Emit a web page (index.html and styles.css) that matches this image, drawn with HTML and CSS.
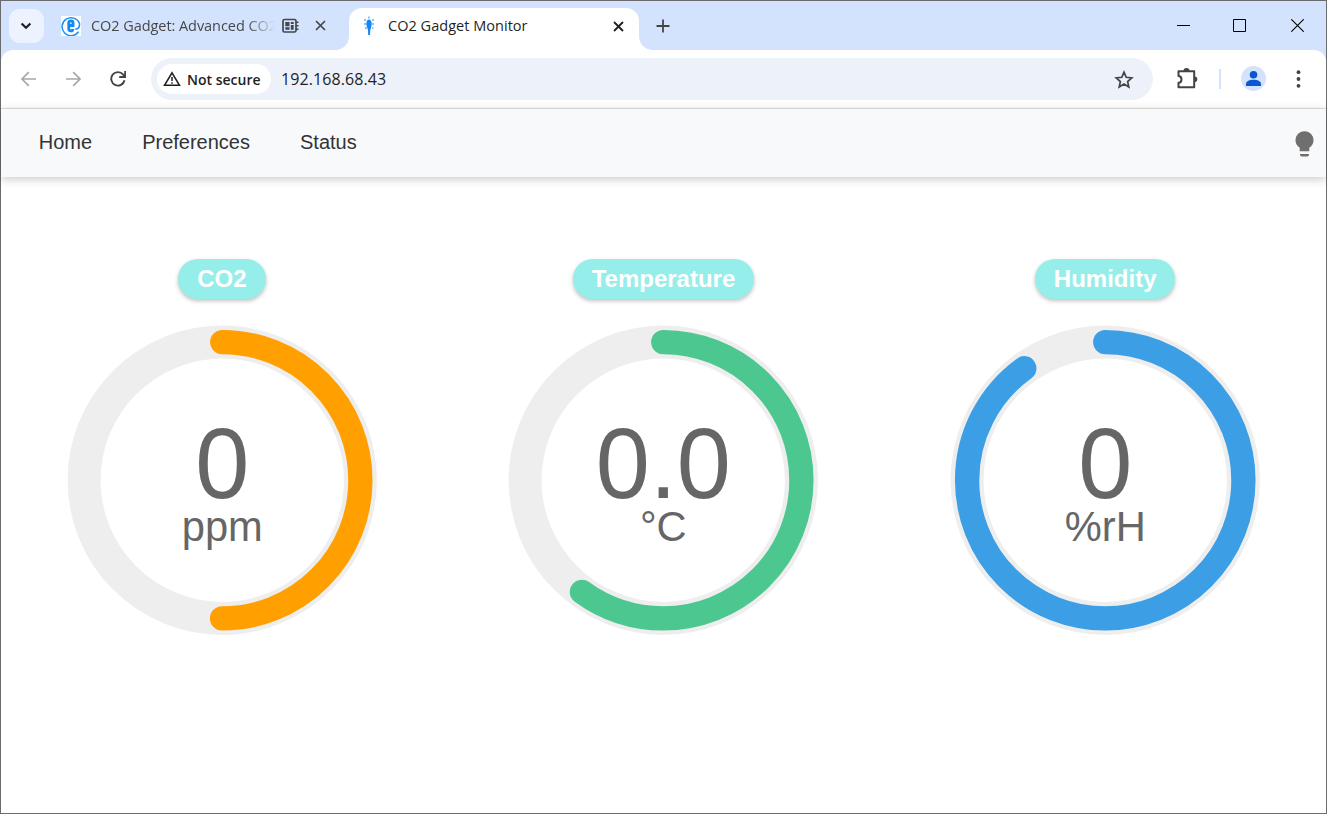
FILE: index.html
```html
<!DOCTYPE html>
<html lang="en">
<head>
<meta charset="utf-8">
<title>CO2 Gadget Monitor</title>
<link rel="stylesheet" href="styles.css">
</head>
<body>
<div class="window">
  <header class="tabstrip">
    <button class="tab-search" aria-label="Search tabs"><svg width="12" height="8" viewBox="0 0 12 8"><path d="M1.6 1.5 6 5.7l4.400-4.200" fill="none" stroke="#1f1f1f" stroke-width="2.200"/></svg></button>
    <div class="tab tab-idle">
      <svg class="favicon" width="20" height="20" viewBox="0 0 20 20"><path fill="#fff" d="M0 0h20v20H0z"/><path d="M17.500 15.800A9 9 0 1 1 18.500 7.500C18.800 11 17 13 14.300 13.300" fill="none" stroke="#1e8ff5" stroke-width="1.500"/><path d="M7.800 9.500h4.200V6.800c0-2.600-4.200-2.600-4.200 0v6c0 2.700 3.900 2.700 4.200.2" fill="none" stroke="#1688f3" stroke-width="2.900"/></svg>
      <span class="tab-title idle-title">CO2 Gadget: Advanced CO2</span>
      <svg class="memory" width="17" height="16" viewBox="0 0 17 16"><rect x="1" y="1.500" width="13" height="12.500" rx="1.500" fill="none" stroke="#44474c" stroke-width="1.700"/><path d="M3.300 4h4.200v4.200H3.300zM8.800 4h2.900v2H8.800zM8.800 7h2.900v4.700H8.800zM3.300 9.300h4.200v2.400H3.300zM14 3.500h2.500V5H14zM14 7h2.500v1.500H14zM14 10.500h2.500V12H14z" fill="#44474c"/></svg>
      <svg class="close" width="11" height="11" viewBox="0 0 11 11"><path d="m1 1 9 9m0-9-9 9" stroke="#44474c" stroke-width="1.700"/></svg>
    </div>
    <div class="tab tab-active">
      <svg class="favicon" width="10" height="20" viewBox="0 0 10 20"><path d="M5 3.500C7.500 4 8.400 7 7.200 11L6.300 14 6 19H4.200L4 14 3 11C1.700 7 2.500 4 5 3.500" fill="#1686f5"/><path d="M4 .5h2v2H4zM0 3h2v2H0zM8 3h2v2H8zM0 7h2v2H0zM8 7h2v2H8zM1 11h2v2H1zM8 11h1.500v2H8z" fill="#8bc4fb"/></svg>
      <span class="tab-title active-title">CO2 Gadget Monitor</span>
      <svg class="close" width="11" height="11" viewBox="0 0 11 11"><path d="m1 1 9 9m0-9-9 9" stroke="#1f1f1f" stroke-width="1.800"/></svg>
    </div>
    <svg class="new-tab" width="14" height="14" viewBox="0 0 14 14"><path d="M7 .5v13M.5 7h13" stroke="#444" stroke-width="1.800"/></svg>
    <div class="window-controls">
      <svg width="13" height="13" viewBox="0 0 13 13"><path d="M0 6.500h13" stroke="#000"/></svg>
      <svg class="maximize" width="13" height="13" viewBox="0 0 13 13"><path d="M.5.5h12v12H.5z" fill="none" stroke="#000"/></svg>
      <svg width="13" height="13" viewBox="0 0 13 13"><path d="m.3.300 12.400 12.400m0-12.400L.3 12.700" stroke="#000" stroke-width="1.100"/></svg>
    </div>
  </header>

  <div class="toolbar-wrap">
    <div class="toolbar">
      <svg class="back" width="16" height="16" viewBox="0 0 16 16"><path d="M16 8H2M8.800 1.200 2 8l6.800 6.800" fill="none" stroke="#a8a8a8" stroke-width="1.700"/></svg>
      <svg class="forward" width="16" height="16" viewBox="0 0 16 16"><path d="M0 8h14M7.200 1.200 14 8l-6.800 6.800" fill="none" stroke="#a8a8a8" stroke-width="1.700"/></svg>
      <svg class="reload" width="16" height="16" viewBox="0 0 16 16"><path d="M14.500 9.200A6.700 6.700 0 1 1 13.200 3.700L15 5.500M15.200 0v6H9.200" fill="none" stroke="#444" stroke-width="1.900"/></svg>
      <div class="omnibox">
        <div class="chip">
          <svg width="18" height="16" viewBox="0 0 18 16"><path d="M9 1.800 16.400 14.200H1.600z" fill="none" stroke="#1f1f1f" stroke-width="1.600"/><path d="M9 6v4m0 1.200v1.600" stroke="#1f1f1f" stroke-width="1.500"/></svg>
          <span class="chip-label">Not secure</span>
        </div>
        <span class="address">192.168.68.43</span>
        <svg class="star" width="20" height="19" viewBox="0 0 20 19"><path d="m10 2.200 2.200 5.100 5.600.5-4.200 3.700 1.200 5.400L10 14l-4.800 2.900 1.200-5.400-4.200-3.700 5.600-.5z" fill="none" stroke="#444" stroke-width="1.700"/></svg>
      </div>
      <svg class="puzzle" width="21" height="21" viewBox="0 0 21 21"><path d="M1.500 3.300h15.700v16H1.500v-4.500c4-.2 4-6.600 0-6.800z" fill="none" stroke="#444" stroke-width="2" stroke-linejoin="round"/><path d="M6.500 3a3 3 0 0 1 6 0zM17.500 8.500a2.800 2.800 0 0 1 0 5.600z" fill="#444"/></svg>
      <span class="divider"></span>
      <svg class="profile" width="25" height="25" viewBox="0 0 25 25"><circle cx="12.500" cy="12.500" r="12.500" fill="#d3e3fd"/><circle cx="12.500" cy="8.700" r="3.800" fill="#0b57d0"/><path d="M5 20v-2c0-5.600 15-5.600 15 0v2z" fill="#0b57d0"/></svg>
      <svg class="menu" width="5" height="18" viewBox="0 0 5 18"><circle cx="2.500" cy="2.200" r="1.900" fill="#444"/><circle cx="2.500" cy="9" r="1.900" fill="#444"/><circle cx="2.500" cy="15.800" r="1.900" fill="#444"/></svg>
    </div>
  </div>

  <nav class="site-nav">
    <a>Home</a><a>Preferences</a><a>Status</a>
    <svg class="bulb" width="19" height="26" viewBox="0 0 19 26"><path d="M4.700 20.300V16.800A9 9 0 1 1 14.300 16.800V20.300zM5 23h9v.8q0 1.700-1.700 1.700H6.700Q5 25.500 5 23.800z" fill="#6f6f6f"/></svg>
  </nav>

  <main class="gauges">
    <section class="gauge">
      <h2>CO2</h2>
      <svg class="chart" viewBox="0 0 36 36"><circle class="track" cx="18" cy="18" r="15.9155"/><path class="arc co2" stroke-dasharray="50 100" d="M18 2.0845a15.9155 15.9155 0 0 1 0 31.831a15.9155 15.9155 0 0 1 0-31.831"/><text class="value" transform="translate(18 20.010) scale(1 1.030)">0</text><text class="unit" transform="translate(18 24.960) scale(1 1.030)">ppm</text></svg>
    </section>
    <section class="gauge">
      <h2>Temperature</h2>
      <svg class="chart" viewBox="0 0 36 36"><circle class="track" cx="18" cy="18" r="15.9155"/><path class="arc temperature" stroke-dasharray="60 100" d="M18 2.0845a15.9155 15.9155 0 0 1 0 31.831a15.9155 15.9155 0 0 1 0-31.831"/><text class="value" transform="translate(18 20.010) scale(1 1.030)">0.0</text><text class="unit" transform="translate(18 24.960) scale(1 1.030)">°C</text></svg>
    </section>
    <section class="gauge">
      <h2>Humidity</h2>
      <svg class="chart" viewBox="0 0 36 36"><circle class="track" cx="18" cy="18" r="15.9155"/><path class="arc humidity" stroke-dasharray="90 100" d="M18 2.0845a15.9155 15.9155 0 0 1 0 31.831a15.9155 15.9155 0 0 1 0-31.831"/><text class="value" transform="translate(18 20.010) scale(1 1.030)">0</text><text class="unit" transform="translate(18 24.960) scale(1 1.030)">%rH</text></svg>
    </section>
  </main>
</div>
</body>
</html>
```
FILE: styles.css
```css
* { box-sizing: border-box; }
html, body { height: 100%; }
body { margin: 0; overflow: hidden; background: #fff; font-family: "Liberation Sans", Arial, sans-serif; }
svg { display: block; flex: none; }
.window { height: 814px; display: flex; flex-direction: column; border: 1px solid #6b6b6f; background: #fff; }

/* Tab strip */
.tabstrip { flex: none; height: 49px; display: flex; align-items: center; padding-left: 8px; background: #d3e3fd; }
.tab-search { width: 35px; height: 34px; padding: 0 1px 0 0; border: 0; border-radius: 11px; background: #ecf3fe; display: flex; align-items: center; justify-content: center; }
.tab { display: flex; align-items: center; font-family: "Open Sans", "Noto Sans", sans-serif; font-size: 14.5px; }
.tab-idle { width: 305px; padding-left: 17px; color: #474747; }
.tab-title { white-space: nowrap; overflow: hidden; line-height: 24px; }
.idle-title { width: 184px; margin-left: 10px; letter-spacing: -.06px; -webkit-mask-image: linear-gradient(90deg, #000 155px, transparent 184px); mask-image: linear-gradient(90deg, #000 155px, transparent 184px); }
.memory { margin-left: 7px; }
.tab-idle .close { margin-left: 16px; }
.tab-active { position: relative; width: 290px; height: 42px; align-self: flex-end; padding: 0 15px 6px; border-radius: 13px 13px 0 0; background: #fff; color: #1f1f1f; }
.tab-active::before, .tab-active::after { content: ""; position: absolute; bottom: 0; width: 13px; height: 13px; }
.tab-active::before { right: 100%; background: radial-gradient(circle at 0 0, transparent 12.5px, #fff 13px); }
.tab-active::after { left: 100%; background: radial-gradient(circle at 100% 0, transparent 12.5px, #fff 13px); }
.active-title { margin-left: 14px; letter-spacing: .03px; }
.tab-active .close { margin-left: auto; }
.new-tab { margin-left: 17px; }
.window-controls { margin-left: auto; padding-right: 22px; display: flex; }
.maximize { margin: 0 45px 0 43px; }

/* Toolbar */
.toolbar-wrap { flex: none; background: #d3e3fd; }
.toolbar { height: 59px; display: flex; align-items: center; padding: 0 25px 0 19px; border-bottom: 1px solid #dfe1df; border-radius: 12px 12px 0 0; background: #fff; }
.forward { margin-left: 30px; }
.reload { margin-left: 28px; }
.omnibox { width: 1002px; height: 42px; margin-left: 25px; padding: 0 19px 0 6px; display: flex; align-items: center; border-radius: 21px; background: #ecf1fa; font-family: "Open Sans", "Noto Sans", sans-serif; color: #1f1f1f; }
.chip { width: 114px; height: 30px; padding-left: 6px; display: flex; align-items: center; gap: 6px; border-radius: 15px; background: #fff; }
.chip-label { font-size: 14px; font-weight: 600; white-space: nowrap; }
.address { margin-left: 10px; font-size: 16px; letter-spacing: .08px; }
.star { margin-left: auto; }
.puzzle { margin-left: 24px; margin-bottom: 2px; }
.divider { width: 2px; height: 20px; margin-left: 21px; background: #d3e3fd; }
.profile { margin-left: 20px; margin-bottom: 1px; }
.menu { margin-left: auto; margin-bottom: 1px; }

/* Site navigation */
.site-nav { position: relative; flex: none; height: 68px; display: flex; align-items: center; gap: 50px; padding: 0 12.5px 2px 37.8px; background: #f8f9fb; box-shadow: 0 2px 9px rgba(0, 0, 0, .22); color: #333; font-size: 20px; }
.bulb { margin-left: auto; margin-top: 4px; }

/* Gauges */
.gauges { display: grid; grid-template-columns: repeat(3, 1fr); padding-top: 82px; }
.gauge { display: flex; flex-direction: column; align-items: center; }
.gauge h2 { margin: 0; height: 40px; padding: 0 19px; border-radius: 20px; background: #96eeea; box-shadow: 0 2px 4px rgba(0, 0, 0, .25); color: #fff; font-size: 24px; line-height: 40px; }
.chart { width: 312.500px; height: 312.500px; margin-top: 25px; }
.track { fill: none; stroke: #eee; stroke-width: 3.8; }
.arc { fill: none; stroke-width: 2.800; stroke-linecap: round; }
.co2 { stroke: #ff9f00; }
.temperature { stroke: #4cc790; }
.humidity { stroke: #3c9ee5; }
.value, .unit { fill: #666; text-anchor: middle; }
.value { font-size: 11.200px; }
.unit { font-size: 4.800px; }
```
